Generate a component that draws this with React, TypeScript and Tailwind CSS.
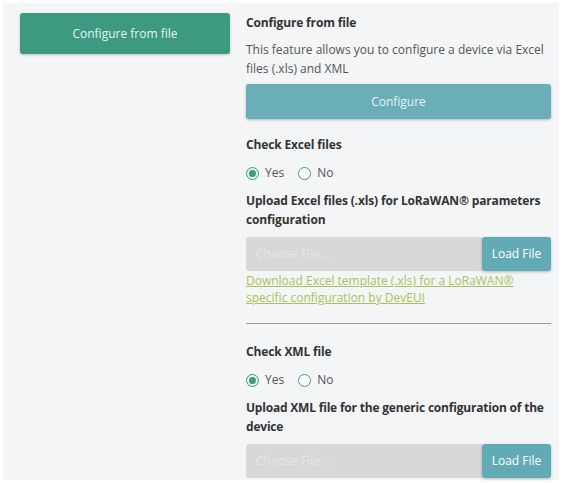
import { useState } from 'react';

function Radio({ checked, label, onClick }: { checked: boolean; label: string; onClick: () => void }) {
  return (
    <button onClick={onClick} className="flex items-center gap-[6px] text-[12px] text-[#555]">
      <span
        className={`w-[13px] h-[13px] rounded-full border flex items-center justify-center ${
          checked ? 'border-[#3d9a80] bg-[#e3f1ec]' : 'border-[#3d9a80] bg-white'
        }`}
      >
        {checked && <span className="w-[7px] h-[7px] rounded-full bg-[#3d9a80]" />}
      </span>
      {label}
    </button>
  );
}

function FileRow({ placeholder }: { placeholder: string }) {
  return (
    <div className="flex h-[34px]">
      <div className="flex-1 bg-[#d7d9d6] flex items-center pl-[10px] text-[12px] text-[#e6e8e6] rounded-l-[3px]">
        {placeholder}
      </div>
      <button className="w-[69px] bg-[#62abb5] text-white text-[12px] rounded-[3px] shadow-[0_1px_3px_rgba(0,0,0,0.25)]">
        Load File
      </button>
    </div>
  );
}

export default function App() {
  const [excel, setExcel] = useState(true);
  const [xml, setXml] = useState(true);

  return (
    <div className="w-[562px] h-[483px] bg-white p-[3px] overflow-hidden" style={{ fontFamily: '"Open Sans", sans-serif' }}>
      <div className="h-full bg-[#f3f5f7] flex pt-[10px] pl-[17px] pr-[8px]">
        {/* Left nav */}
        <div className="w-[210px] shrink-0">
          <button className="w-full h-[41px] bg-[#3d9a80] text-[#e3f5ee] text-[12px] rounded-[3px] shadow-[0_1px_3px_rgba(0,0,0,0.2)]">
            Configure from file
          </button>
        </div>

        {/* Panel */}
        <div className="flex-1 ml-[16px] text-[#333]">
          <div className="text-[12px] font-bold mt-[1px] leading-[18px] tracking-[-0.15px]">Configure from file</div>
          <p className="text-[12px] text-[#555] leading-[19px] mt-[8px]">
            This feature allows you to configure a device via Excel files (.xls) and XML
          </p>
          <button className="w-full h-[35px] mt-[6px] bg-[#6aafb8] text-[#e6f3f5] text-[12px] rounded-[3px] shadow-[0_1px_3px_rgba(0,0,0,0.25)]">
            Configure
          </button>

          <div className="text-[12px] font-bold mt-[17px] leading-[18px] tracking-[-0.15px]">Check Excel files</div>
          <div className="flex gap-[14px] mt-[10px]">
            <Radio checked={excel} label="Yes" onClick={() => setExcel(true)} />
            <Radio checked={!excel} label="No" onClick={() => setExcel(false)} />
          </div>
          <div className="text-[12px] font-bold mt-[9px] leading-[19px] tracking-[-0.15px]">
            Upload Excel files (.xls) for LoRaWAN® parameters configuration
          </div>
          <div className="mt-[8px]">
            <FileRow placeholder="Choose File..." />
          </div>
          <a className="block text-[12px] leading-[17px] text-[#a9c35a] underline mt-[1px]">
            Download Excel template (.xls) for a LoRaWAN® specific configuration by DevEUI
          </a>

          <hr className="border-t border-[#9a9a9a] mt-[17px]" />

          <div className="text-[12px] font-bold mt-[19px] leading-[18px] tracking-[-0.15px]">Check XML file</div>
          <div className="flex gap-[14px] mt-[10px]">
            <Radio checked={xml} label="Yes" onClick={() => setXml(true)} />
            <Radio checked={!xml} label="No" onClick={() => setXml(false)} />
          </div>
          <div className="text-[12px] font-bold mt-[9px] leading-[19px] tracking-[-0.2px]">
            Upload XML file for the generic configuration of the device
          </div>
          <div className="mt-[8px]">
            <FileRow placeholder="Choose File ..." />
          </div>
        </div>
      </div>
    </div>
  );
}
